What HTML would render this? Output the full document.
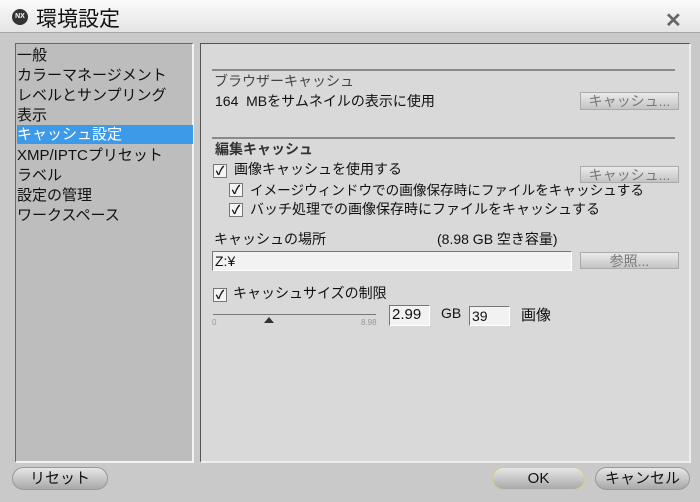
<!DOCTYPE html>
<html><head><meta charset="utf-8"><style>
*{margin:0;padding:0;box-sizing:border-box}
body{width:700px;height:502px;overflow:hidden;background:#c9c9c9;font-family:"Liberation Sans","Noto Sans CJK JP",sans-serif;font-size:14px;color:#111;position:relative}
.a{position:absolute;white-space:nowrap}
.title{left:0;top:0;width:700px;height:33px;background:linear-gradient(#fbfbfb,#e4e4e4);border-bottom:1px solid #a8a8a8}
.left{left:15px;top:43px;width:179px;height:420px;background:#bdbdbd;border:1px solid #666;border-right:2px solid #f4f4f4;border-bottom:2px solid #f4f4f4}
.right{left:200px;top:43px;width:491px;height:420px;background:#d9d9d9;border:1px solid #555;border-right:2px solid #eee;border-bottom:2px solid #eee}
.li{left:17px;font-size:15px;height:20px;line-height:20px;top:0}
.hr{height:2px;background:#8a8a8a;left:212px;width:463px}
.btn{background:linear-gradient(#eaeaea,#c4c4c4);border:1px solid #aaa;color:#777;text-align:center;font-size:14px;line-height:16px}
.cb{width:14px;height:14px;background:#f4f4f4;border:1px solid #777;font-size:12px;line-height:12px;text-align:center;font-weight:bold}
.inp{background:#f2f2f2;border:1px solid #777;border-right-color:#fff;border-bottom-color:#fff;font-size:14px;padding-left:2px;line-height:18px}
.rb{height:23px;border-radius:12px;background:linear-gradient(#e6e6e6,#a9a9a9);border:1px solid #999;text-align:center;line-height:21px;font-size:15px}
</style></head><body>
<div class="a title"></div>
<div class="a" style="left:12px;top:9px;width:16px;height:16px;border-radius:50%;background:#333;color:#fff;font-size:7px;line-height:16px;text-align:center;font-weight:bold">NX</div>
<div class="a" style="left:36px;top:3px;font-size:21px">環境設定</div>
<div class="a" style="left:665px;top:8px;font-size:20px;color:#666;font-weight:bold">✕</div>

<div class="a left"></div>
<div class="a" style="left:17px;top:125px;width:176px;height:19px;background:#3d9ae9"></div>
<div class="a li" style="top:46px">一般</div>
<div class="a li" style="top:66px">カラーマネージメント</div>
<div class="a li" style="top:86px">レベルとサンプリング</div>
<div class="a li" style="top:106px">表示</div>
<div class="a li" style="top:125px;color:#fff">キャッシュ設定</div>
<div class="a li" style="top:146px">XMP/IPTCプリセット</div>
<div class="a li" style="top:166px">ラベル</div>
<div class="a li" style="top:186px">設定の管理</div>
<div class="a li" style="top:206px">ワークスペース</div>

<div class="a right"></div>
<div class="a hr" style="top:69px"></div>
<div class="a" style="left:214px;top:71px;color:#444">ブラウザーキャッシュ</div>
<div class="a" style="left:215px;top:91px">164&nbsp; MBをサムネイルの表示に使用</div>
<div class="a btn" style="left:580px;top:92px;width:99px;height:18px">キャッシュ...</div>
<div class="a hr" style="top:137px"></div>
<div class="a" style="left:215px;top:139px;color:#333;font-weight:bold">編集キャッシュ</div>
<div class="a cb" style="left:213px;top:164px">✓</div>
<div class="a" style="left:234px;top:159px">画像キャッシュを使用する</div>
<div class="a btn" style="left:580px;top:166px;width:99px;height:17px">キャッシュ...</div>
<div class="a cb" style="left:229px;top:183px">✓</div>
<div class="a" style="left:250px;top:179px;font-size:13.6px">イメージウィンドウでの画像保存時にファイルをキャッシュする</div>
<div class="a cb" style="left:229px;top:203px">✓</div>
<div class="a" style="left:250px;top:199px">バッチ処理での画像保存時にファイルをキャッシュする</div>
<div class="a" style="left:214px;top:229px">キャッシュの場所</div>
<div class="a" style="left:437px;top:229px">(8.98 GB 空き容量)</div>
<div class="a inp" style="left:212px;top:251px;width:360px;height:20px">Z:¥</div>
<div class="a btn" style="left:580px;top:252px;width:99px;height:17px">参照...</div>
<div class="a cb" style="left:213px;top:288px">✓</div>
<div class="a" style="left:233px;top:283px">キャッシュサイズの制限</div>
<div class="a" style="left:213px;top:314px;width:163px;height:1px;background:#777"></div>
<div class="a" style="left:264px;top:317px;width:0;height:0;border-left:5px solid transparent;border-right:5px solid transparent;border-bottom:6px solid #333"></div>
<div class="a" style="left:212px;top:318px;font-size:8px;color:#999">0</div>
<div class="a" style="left:361px;top:318px;font-size:8px;color:#999">8.98</div>
<div class="a inp" style="left:389px;top:305px;width:41px;height:21px;font-size:15px">2.99</div>
<div class="a" style="left:441px;top:305px">GB</div>
<div class="a inp" style="left:469px;top:306px;width:41px;height:20px">39</div>
<div class="a" style="left:521px;top:304px;font-size:15px">画像</div>

<div class="a rb" style="left:12px;top:467px;width:96px">リセット</div>
<div class="a rb" style="left:492px;top:467px;width:93px;border-color:#d8c98a">OK</div>
<div class="a rb" style="left:595px;top:467px;width:95px">キャンセル</div>
</body></html>
